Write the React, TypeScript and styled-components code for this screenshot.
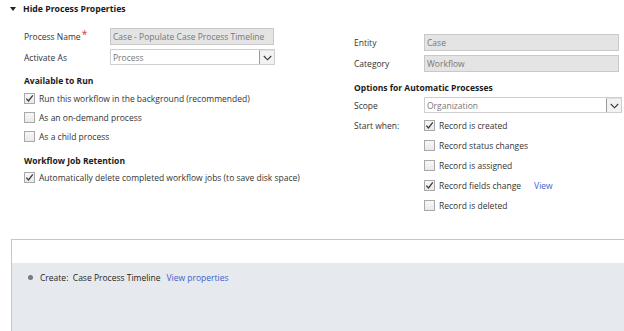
import styled, { createGlobalStyle } from "styled-components";

const GlobalStyle = createGlobalStyle`
  html, body {
    margin: 0;
    padding: 0;
    background: #ffffff;
  }
  body {
    font-family: "Open Sans", "Noto Sans", sans-serif;
    font-size: 8.5px;
    color: #262626;
  }
`;

const Page = styled.div`
  width: 624px;
  height: 331px;
  overflow: hidden;
`;

const Header = styled.div`
  display: flex;
  align-items: center;
  gap: 7px;
  height: 18px;
  padding-left: 10px;
  font-weight: 700;
  font-size: 8.7px;
  color: #1a1a1a;
`;

const Triangle = styled.span`
  width: 0;
  height: 0;
  border-left: 3px solid transparent;
  border-right: 3px solid transparent;
  border-top: 4px solid #222;
`;

const Columns = styled.div`
  display: grid;
  grid-template-columns: 330px 1fr;
  padding-left: 24px;
  margin-top: 10px;
`;

const Column = styled.div<{ $top: number }>`
  display: flex;
  flex-direction: column;
  margin-top: ${(p) => p.$top}px;
`;

const FieldRow = styled.div<{ $labelWidth: number; $gap?: number }>`
  display: grid;
  grid-template-columns: ${(p) => p.$labelWidth}px 1fr;
  align-items: center;
  margin-top: ${(p) => p.$gap ?? 0}px;
`;

const Label = styled.div`
  color: #333;
  position: relative;
`;

const Required = styled.span`
  color: #e0302b;
  font-size: 10px;
  position: absolute;
  top: -4px;
  margin-left: 1px;
`;

const TextBox = styled.div<{ $width: number }>`
  width: ${(p) => p.$width}px;
  height: 17px;
  box-sizing: border-box;
  border: 1px solid #c9c9c9;
  background: #e4e4e4;
  color: #777;
  padding-left: 2px;
  display: flex;
  align-items: center;
`;

const SelectBox = styled.div<{ $width: number }>`
  width: ${(p) => p.$width}px;
  height: 16px;
  box-sizing: border-box;
  border: 1px solid #cfcfcf;
  background: #fff;
  color: #777;
  display: flex;
  align-items: center;
`;

const SelectText = styled.span`
  flex: 1;
  padding-left: 2px;
`;

const ArrowButton = styled.span`
  width: 15px;
  height: 14px;
  box-sizing: border-box;
  border-left: 1px solid #9a9a9a;
  border-top: 1px solid #e0e0e0;
  background: #f2f2f2;
  display: flex;
  align-items: center;
  justify-content: center;
`;

const Heading = styled.div<{ $gap: number; $after?: number }>`
  font-weight: 700;
  color: #1a1a1a;
  height: 12px;
  line-height: 12px;
  margin-top: ${(p) => p.$gap}px;
  margin-bottom: ${(p) => p.$after ?? 0}px;
`;

const CheckRow = styled.div<{ $height: number }>`
  display: flex;
  align-items: center;
  gap: 4px;
  height: ${(p) => p.$height}px;
  color: #333;
`;

const Box = styled.span`
  width: 11px;
  height: 11px;
  box-sizing: border-box;
  border: 1px solid #a9a9a9;
  background: linear-gradient(#f7f7f7, #e9e9e9);
  display: flex;
  align-items: center;
  justify-content: center;
  flex-shrink: 0;
`;

const Link = styled.span`
  color: #3f63c8;
  margin-left: 9px;
`;

const StartWhen = styled.div`
  display: grid;
  grid-template-columns: 70px 1fr;
  margin-top: 2px;
`;

const StartLabel = styled.div`
  color: #333;
  height: 20px;
  display: flex;
  align-items: center;
`;

const Panel = styled.div`
  margin-top: 24px;
  margin-left: 11px;
  border-top: 1px solid #c6c6c6;
  border-left: 1px solid #c6c6c6;
`;

const PanelTop = styled.div`
  height: 23px;
  background: #fff;
`;

const PanelBody = styled.div`
  height: 70px;
  background: #e6e9ed;
  padding: 8px 0 0 16px;
  box-sizing: border-box;
`;

const Step = styled.div`
  display: flex;
  align-items: center;
  height: 12px;
  color: #262626;
`;

const Bullet = styled.span`
  width: 5px;
  height: 5px;
  border-radius: 50%;
  background: #7a7a7a;
  margin-right: 7px;
`;

const StepLink = styled.span`
  color: #3f63c8;
  margin-left: 6px;
`;

const Check = () => (
  <svg width="9" height="9" viewBox="0 0 9 9">
    <path d="M1.3 4.6 L3.5 7 L7.8 1.4" fill="none" stroke="#3a3a3a" strokeWidth="1.3" />
  </svg>
);

const Chevron = () => (
  <svg width="9" height="6" viewBox="0 0 9 6">
    <path d="M0.8 1 L4.5 4.8 L8.2 1" fill="none" stroke="#333" strokeWidth="1.1" />
  </svg>
);

const CheckItem = ({
  label,
  checked,
  height,
  link,
}: {
  label: string;
  checked?: boolean;
  height: number;
  link?: string;
}) => (
  <CheckRow $height={height}>
    <Box>{checked && <Check />}</Box>
    {label}
    {link && <Link>{link}</Link>}
  </CheckRow>
);

const startWhen = [
  { label: "Record is created", checked: true },
  { label: "Record status changes" },
  { label: "Record is assigned" },
  { label: "Record fields change", checked: true, link: "View" },
  { label: "Record is deleted" },
];

const App = () => (
  <Page>
    <GlobalStyle />
    <Header>
      <Triangle />
      Hide Process Properties
    </Header>
    <Columns>
      <Column $top={0}>
        <FieldRow $labelWidth={86}>
          <Label>
            Process Name<Required>*</Required>
          </Label>
          <TextBox $width={164}>Case - Populate Case Process Timeline</TextBox>
        </FieldRow>
        <FieldRow $labelWidth={86} $gap={4}>
          <Label>Activate As</Label>
          <SelectBox $width={165}>
            <SelectText>Process</SelectText>
            <ArrowButton>
              <Chevron />
            </ArrowButton>
          </SelectBox>
        </FieldRow>
        <Heading $gap={10} $after={2}>
          Available to Run
        </Heading>
        <CheckItem label="Run this workflow in the background (recommended)" checked height={19} />
        <CheckItem label="As an on-demand process" height={19} />
        <CheckItem label="As a child process" height={19} />
        <Heading $gap={9} $after={1}>
          Workflow Job Retention
        </Heading>
        <CheckItem
          label="Automatically delete completed workflow jobs (to save disk space)"
          checked
          height={19}
        />
      </Column>
      <Column $top={6}>
        <FieldRow $labelWidth={70}>
          <Label>Entity</Label>
          <TextBox $width={195}>Case</TextBox>
        </FieldRow>
        <FieldRow $labelWidth={70} $gap={4}>
          <Label>Category</Label>
          <TextBox $width={195}>Workflow</TextBox>
        </FieldRow>
        <Heading $gap={10}>Options for Automatic Processes</Heading>
        <FieldRow $labelWidth={70} $gap={3}>
          <Label>Scope</Label>
          <SelectBox $width={198}>
            <SelectText>Organization</SelectText>
            <ArrowButton>
              <Chevron />
            </ArrowButton>
          </SelectBox>
        </FieldRow>
        <StartWhen>
          <StartLabel>Start when:</StartLabel>
          <div>
            {startWhen.map((item) => (
              <CheckItem
                key={item.label}
                label={item.label}
                checked={item.checked}
                link={item.link}
                height={20}
              />
            ))}
          </div>
        </StartWhen>
      </Column>
    </Columns>
    <Panel>
      <PanelTop />
      <PanelBody>
        <Step>
          <Bullet />
          Create:&nbsp; Case Process Timeline
          <StepLink>View properties</StepLink>
        </Step>
      </PanelBody>
    </Panel>
  </Page>
);

export default App;
